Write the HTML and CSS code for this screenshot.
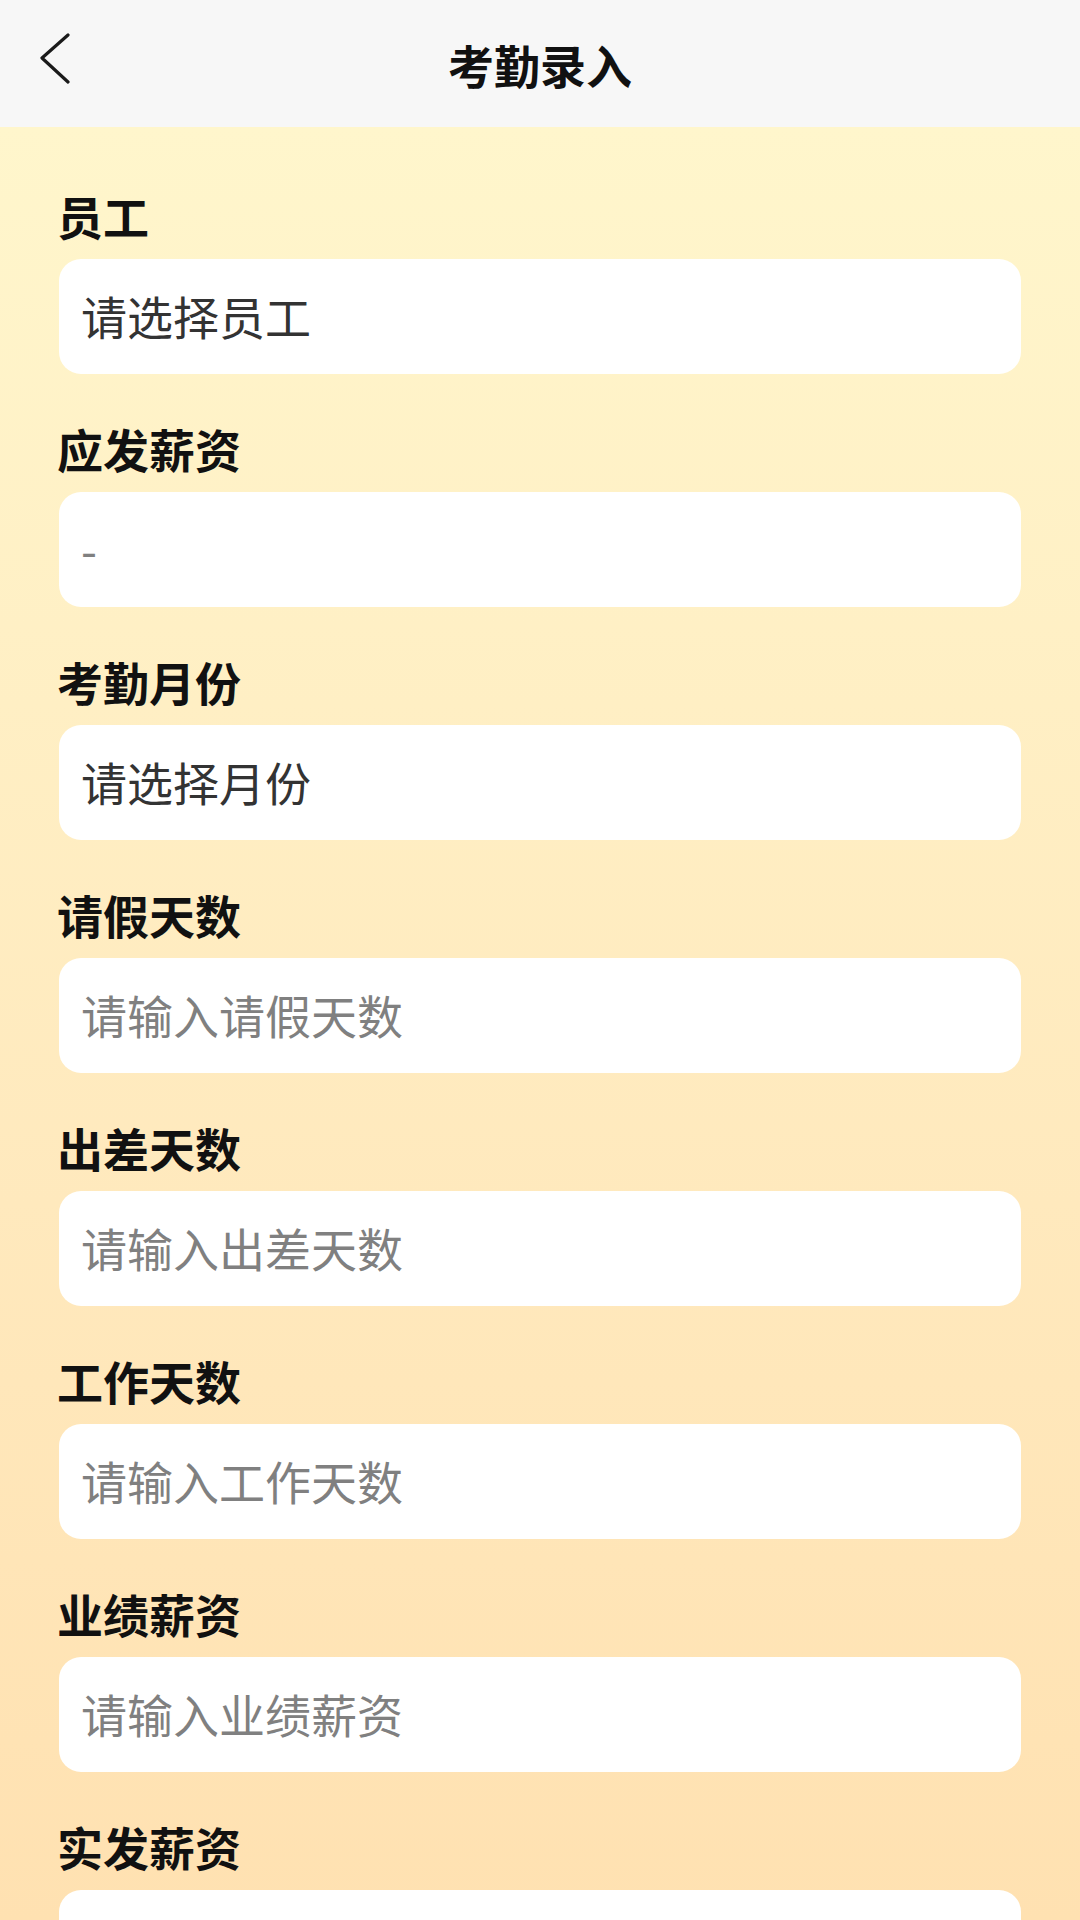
FILE: index.html
```html
<!DOCTYPE html>
<html lang="zh-CN">
<head>
<meta charset="utf-8">
<title>考勤录入</title>
<link rel="stylesheet" href="styles.css">
</head>
<body>
<div class="page">
  <header class="nav">
    <span class="back">
      <svg width="40" height="60" viewBox="0 0 40 60"><polyline points="28,5 2,28 28,52" fill="none" stroke="#1a1a1a" stroke-width="3.2" stroke-linecap="round" stroke-linejoin="round"/></svg>
    </span>
    <h1 class="title">考勤录入</h1>
  </header>
  <main class="content">
    <div class="field"><div class="label">员工</div><div class="box value">请选择员工</div></div>
    <div class="field"><div class="label">应发薪资</div><div class="box placeholder">-</div></div>
    <div class="field"><div class="label">考勤月份</div><div class="box value">请选择月份</div></div>
    <div class="field"><div class="label">请假天数</div><div class="box placeholder">请输入请假天数</div></div>
    <div class="field"><div class="label">出差天数</div><div class="box placeholder">请输入出差天数</div></div>
    <div class="field"><div class="label">工作天数</div><div class="box placeholder">请输入工作天数</div></div>
    <div class="field"><div class="label">业绩薪资</div><div class="box placeholder">请输入业绩薪资</div></div>
    <div class="field"><div class="label">实发薪资</div><div class="box placeholder"></div></div>
  </main>
</div>
</body>
</html>
```
FILE: styles.css
```css
html, body {
  margin: 0;
  padding: 0;
  height: 100%;
  overflow: hidden;
}
body {
  font-family: "Noto Sans CJK SC", "Noto Sans", sans-serif;
  color: #1a1a1a;
}
.page {
  height: 1920px;
  display: flex;
  flex-direction: column;
}
.nav {
  position: relative;
  height: 127px;
  flex: none;
  background: #f7f7f7;
  display: flex;
  align-items: center;
  justify-content: center;
}
.back {
  position: absolute;
  left: 40px;
  top: 30px;
  width: 40px;
  height: 60px;
}
.back svg {
  display: block;
}
.title {
  margin: 0;
  font-size: 46px;
  font-weight: 700;
  line-height: 56px;
  color: #111;
}
.content {
  flex: 1;
  overflow: hidden;
  padding: 60px 59px 0;
  background: linear-gradient(180deg, #fff6cc 0%, #ffe9bd 60%, #ffe1b1 100%);
}
.field {
  margin-bottom: 46px;
}
.label {
  font-size: 46px;
  font-weight: 700;
  line-height: 56px;
  margin: 0 0 16px -2px;
  color: #111;
}
.box {
  height: 115px;
  box-sizing: border-box;
  background: #fff;
  border-radius: 22px;
  padding: 0 22px 4px;
  display: flex;
  align-items: center;
  font-size: 46px;
  line-height: 56px;
}
.value {
  color: #333;
}
.placeholder {
  color: #808080;
}
```
